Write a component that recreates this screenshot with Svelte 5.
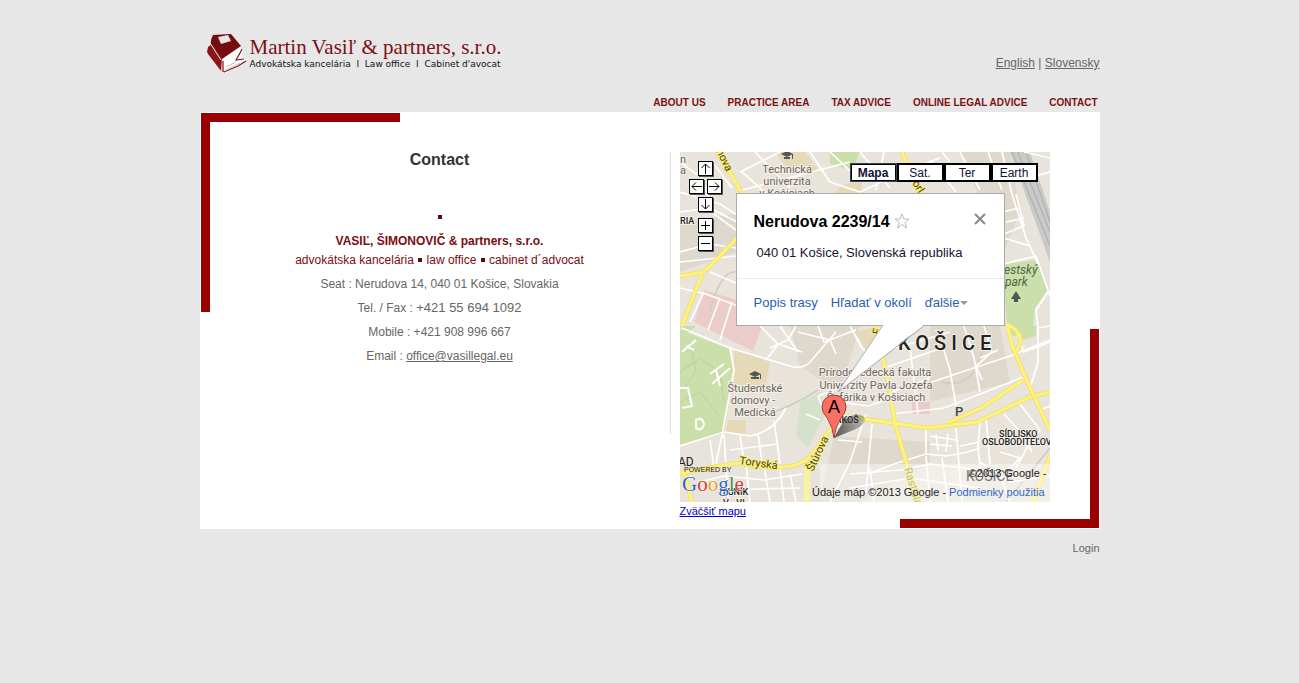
<script>
  const nav = ['About us', 'Practice area', 'Tax advice', 'Online legal advice', 'Contact'];
  const layers = ['Mapa', 'Sat.', 'Ter', 'Earth'];
  let layer = $state('Mapa');
  const pads = [
    { name: 'up', d: 'M6.5 12V2M2.500 6l4-4 4 4' },
    { name: 'left', d: 'M12 6.500H2M6 2.500l-4 4 4 4' },
    { name: 'right', d: 'M1 6.500h10M7 2.500l4 4-4 4' },
    { name: 'down', d: 'M6.500 1v10M2.500 7l4 4 4-4' },
    { name: 'zoom-in', d: 'M6.500 2v9M2 6.500h9' },
    { name: 'zoom-out', d: 'M2 6.500h9' }
  ];
  const minor = [
    'M0 40L40 52L62 66M0 60L30 56L57 70M60 20L100 0M62 38L170 10M75 0L110 36M130 0L150 30L180 40M150 0L180 28M62 20L90 45',
    'M0 100L30 92L56 96M0 110L56 104M20 20L34 62L56 78M0 10L16 22L34 12L52 36',
    'M0 136L26 142L58 154M30 120L58 132M24 140L10 170M40 146L28 178M52 150L40 188',
    'M2 176L50 196L110 214Q122 218 130 210L156 180M50 196L54 218L42 283L36 312',
    'M0 294L44 280L70 284Q94 280 106 256M86 208L98 192L80 174M98 192L122 200M100 174L118 200M90 196L108 188L116 174',
    'M44 282L48 346M60 284L64 310M78 282L82 310M94 268L100 312M30 288L34 316M50 298L98 292M66 312L70 350M84 314L90 350M100 316L104 350M20 330L44 324L84 328L122 322M40 338L120 336M110 322L116 350',
    'M138 244L148 270M138 244L170 232M140 268L126 262M150 276L186 268M186 262L170 310L150 350M192 272L186 340M158 288L182 290M160 250L188 254L206 248',
    'M118 180L150 188L156 202M138 174L144 190L176 178M170 174L182 196L196 210M196 200L216 196L270 180M204 216L262 196M212 262L264 256L326 232L346 224M230 196L238 262M262 192L270 218L276 254M284 174L294 206L300 240M304 174L312 200L296 214L302 228M318 198L300 206M252 230L330 204L370 188',
    'M212 240L250 226M246 276L246 302L214 312L188 322M246 302L266 304L288 300L300 296M276 276L282 350M300 270L298 296L302 330M250 284L276 288M250 292L272 294M256 282L258 298M268 282L266 300M280 294L300 290M306 266L310 312M324 262L342 282L352 300M340 252L360 278L346 296M312 290L336 288M320 300L340 306L324 322M336 316L350 290M360 258L370 254',
    'M170 322L220 318L250 312L300 318M170 336L230 326L300 336M190 316L194 350M246 304L250 350M262 306L268 350M300 310L330 330L370 324M320 322L330 350',
    'M322 0L332 42L346 86L358 112M330 30L370 20M322 60L340 56M324 86L350 94M326 70L344 66M336 42L344 74L324 82M308 0L322 38M280 0L300 38M250 8L276 40M262 0L270 10M324 112L356 104L370 144M368 140L356 158L358 176L370 174M344 0L370 6M358 176L358 210L350 236M336 180L344 200L370 190',
    'M180 40L210 26L260 6M196 38L204 0M180 0L210 36M220 20L240 12'
  ];
  const major = [
    'M0 124L23 120L36 108L57 86L80 60M23 120L12 148L2 174M37 0L50 20L62 42',
    'M222 0L230 20L243 42M0 321L40 314L57 311L80 315L103 315Q124 314 134 300L153 274',
    'M195 168L210 240L215 272L227 313L240 350M154 262L190 268L213 271L247 276L297 270L350 245L370 240',
    'M268 271L303 255L343 228M327 172L333 196L350 236L370 278M327 172Q350 184 334 202M370 304L353 350M4 321L12 350'
  ];
</script>

<svelte:head><title>Contact</title></svelte:head>

<div class="page">
  <header>
    <a class="logo" href="#home" aria-label="Home">
      <svg class="book" viewBox="0 0 42 42" aria-hidden="true">
        <path fill="#fff" d="M15 27L34 15L37 18L36 24L40 28L33 34L19 41Z" />
        <path fill="#760b10" d="M7 3L25 2L35 14L16 27L6 14Q3 11 7 3Z" />
        <path fill="#8c1318" d="M2 15L6 12L16 26L15 39L2 22L1 20Z" />
        <path fill="#e8e5e5" d="M12 5L22 3L25 9L15 12Z" />
        <path fill="none" stroke="#eee" d="M5 5Q2 10 6 14L15 28" />
        <path fill="none" stroke="#891117" stroke-width="1.2" d="M18 40L32 34L40 29M36 17L33 23M34 21L30 28L38 27M17 29L17 40" />
        <path fill="none" stroke="#c9bcbc" d="M20 38L34 31M20 35L30 30" />
      </svg>
      <span class="words"><b>Martin Vasiľ &amp; partners, s.r.o.</b><small>Advokátska kancelária &nbsp;I&nbsp; Law office &nbsp;I&nbsp; Cabinet d'avocat</small></span>
    </a>
    <div class="lang"><a href="#en">English</a> | <a href="#sk">Slovensky</a></div>
  </header>
  <nav>
    {#each nav as item}<a href="#{item}">{item}</a>{/each}
  </nav>

  <main>
    <section class="contact">
      <h1>Contact</h1>
      <p class="dot"><i></i></p>
      <p class="firm"><strong>VASIĽ, ŠIMONOVIČ &amp; partners, s.r.o.</strong><br />advokátska kancelária <i></i> law office <i></i> cabinet d´advocat</p>
      <p>Seat : Nerudova 14, 040 01 Košice, Slovakia</p>
      <p>Tel. / Fax : <span class="tel">+421 55 694 1092</span></p>
      <p>Mobile : +421 908 996 667</p>
      <p>Email : <a href="mailto:office@vasillegal.eu">office@vasillegal.eu</a></p>
    </section>

    <section class="location">
      <div class="map">
        <svg class="tiles" viewBox="0 0 370 350" aria-label="Košice">
          <rect width="370" height="350" fill="#e9e4db" />
          <path fill="#ded8cd" d="M0 70L56 62V100L0 120ZM110 174H180L160 240L120 214ZM154 284L250 290V310L180 350H140ZM250 174H320L330 230L250 250ZM280 0H330L340 60L324 100Z" />
          <path fill="#cadfaa" d="M0 178L50 197L54 220L44 282L0 293ZM0 174H16L4 184ZM150 0H180L172 18L150 12ZM322 112L357 108L368 137L355 156L352 184H328ZM332 174H356V184L342 188Z" />
          <path fill="#d6e1cb" d="M120 250L140 240L146 262L128 296L116 284Z" />
          <path fill="#ebcccb" d="M24 138L57 148V174H82L73 199L14 170ZM232 250H250V262H232Z" />
          <path fill="#e6d9b8" d="M54 196L90 210L86 234H54ZM48 268H66V282H46ZM95 0H125L140 20H110ZM176 180L198 174L192 210ZM160 34L182 28V41H155Z" />
          <path fill="#c9c9c7" d="M330 0H350L370 60V110Z" />
          <path fill="none" stroke="#aaa" d="M332 0L370 94M338 0L370 80M346 0L370 70" />
          <path fill="none" stroke="#d1cabe" stroke-width="1.5" d="M30 160Q40 118 56 120M82 264Q110 256 138 238M262 230Q302 240 306 174M326 350L370 296" />
          <path fill="none" stroke="#bbd29b" d="M0 220L20 206L40 220L44 250M0 250L20 240L38 262M10 190L16 220L4 236" />
          {#each minor as d}<path {d} fill="none" stroke="#fff" stroke-width="1.7" />{/each}
          <path fill="none" stroke="#fff" stroke-width="2" d="M2 200L16 188M6 194L14 198M30 222L44 212M32 232L50 216M36 218L40 234M0 236L8 236L12 254L2 256M16 268Q22 264 24 272Q22 280 16 276Z" />
          {#each major as d}<path {d} fill="none" stroke="#eedc70" stroke-width="4.5" /><path {d} fill="none" stroke="#fdf37c" stroke-width="3" />{/each}
          <path d="M127 312V350" stroke="#faf2a0" stroke-width="6" />
          <path fill="#555" d="M101 2L107 -1L113 2L107 5ZM104 5H110V7H104ZM69 222L75 219L81 222L75 225ZM71 225H79V227H71ZM336 139L341 147H338V150H334V147H331ZM112 2H113V7H112ZM80 222H81V227H80Z" />
          <g class="place">
            <text x="107" y="21">Technická</text><text x="107" y="33">univerzita</text><text x="107" y="45">v Košiciach</text>
            <text x="75" y="240">Študentské</text><text x="73" y="252">domovy -</text><text x="75" y="264">Medická</text>
            <text x="195" y="224">Prírodovedecká fakulta</text><text x="196" y="237">Univerzity Pavla Jozefa</text><text x="196" y="249">Šafárika v Košiciach</text>
            <text x="3" y="11">n</text><text x="3" y="22">a</text>
          </g>
          <g class="green"><text x="324" y="122">estský</text><text x="325" y="134">park</text></g>
          <g class="area">
            <text x="0" y="72">RIA</text><text x="149" y="271">NÁKOŠ</text><text x="319" y="285">SÍDLISKO</text><text x="302" y="293">OSLOBODITEĽOV</text>
            <text x="43" y="343">ĽUNÍK</text><text x="43" y="354">V - VI</text>
          </g>
          <text class="road" transform="translate(36 -1) rotate(64)">nova</text>
          <text class="road" transform="translate(232 31) rotate(58)">orl</text>
          <text class="road" transform="translate(200 183) rotate(-80)">F</text>
          <text class="road" transform="translate(59 312) rotate(8)">Toryská</text>
          <text class="road" transform="translate(133 320) rotate(-65)">Štúrova</text>
          <text class="road pale" transform="translate(224 317) rotate(73)">Rastislav</text>
          <text class="city" x="218" y="198">KOŠICE</text>
          <text class="park" x="275" y="264">P</text>
          <text class="ad" x="-2" y="314">AD</text>
          <rect x="140" y="312" width="230" height="38" fill="#fff" opacity=".4" />
          <text class="ghost" x="286" y="329">KOŠICE</text>
          <text class="powered" x="4" y="320">POWERED BY</text>
          <text class="google" x="2" y="339"><tspan fill="#3565c4">G</tspan><tspan fill="#d83a35">o</tspan><tspan fill="#e0a41a">o</tspan><tspan fill="#3565c4">g</tspan><tspan fill="#36934a">l</tspan><tspan fill="#d83a35">e</tspan></text>
        </svg>
        <div class="pad">
          {#each pads as p}
            <button class={p.name} aria-label={p.name}><svg viewBox="0 0 13 13"><path d={p.d} /></svg></button>
          {/each}
        </div>
        <div class="layers">
          {#each layers as l}<button class:on={layer === l} onclick={() => (layer = l)}>{l}</button>{/each}
        </div>
        <div class="bubble">
          <div class="info">
            <h2>Nerudova 2239/14 <svg class="star" viewBox="0 0 16 16"><path d="M8 1l2 5h5l-4 3.500 1.500 5.500L8 11.500 3.500 15 5 9.500 1 6h5z" /></svg></h2>
            <button class="close" aria-label="Close"><svg viewBox="0 0 12 12"><path d="M1 1l10 10M11 1l-10 10" /></svg></button>
            <p>040 01 Košice, Slovenská republika</p>
          </div>
          <div class="actions"><a href="#trasa">Popis trasy</a><a href="#okolie">Hľadať v okolí</a><a href="#dalsie">ďalšie<span class="caret"></span></a></div>
        </div>
        <svg class="marker" viewBox="0 0 370 350" aria-hidden="true">
          <defs><linearGradient id="shade"><stop stop-color="#222" stop-opacity=".75" /><stop offset="1" stop-color="#444" stop-opacity=".3" /></linearGradient></defs>
          <path fill="#fff" d="M203 172L158 240L245 172Z" />
          <path fill="none" stroke="#aaa" d="M203 173L158 240L245 173" />
          <path fill="url(#shade)" d="M154 286L164 268Q175 260 183 264Q189 270 176 277Z" />
          <path fill="#fa7164" stroke="#a33c35" d="M154 286Q153 275 147 266Q142 260 142 255A12 12 0 0 1 166 255Q166 260 161 266Q155 275 154 286Z" />
          <text x="154" y="261">A</text>
        </svg>
        <div class="credits"><span>©2013 Google -</span><span>Údaje máp ©2013 Google - <a href="#podmienky">Podmienky použitia</a></span></div>
      </div>
      <a class="larger" href="#mapa">Zväčšiť mapu</a>
    </section>
  </main>
  <footer><a href="#login">Login</a></footer>
</div>

<style>
  :global(body) { margin: 0; background: #e7e7e7; }
  .page { max-width: 900px; margin: 0 auto; font: 12px/18px "Liberation Sans", Arial, sans-serif; color: #666; }
  a { color: inherit; }
  header { display: flex; justify-content: space-between; align-items: flex-end; padding: 32px 0 0 6px; }
  .logo { display: flex; gap: 2px; text-decoration: none; }
  .book { width: 42px; height: 42px; }
  .words { display: flex; flex-direction: column; white-space: nowrap; padding-top: 4px; }
  .words b { font: 21px/22px "Liberation Serif", serif; color: #7c1016; }
  .words small { font: 9px/12px "DejaVu Sans", sans-serif; color: #111; }
  .lang { padding-bottom: 2px; }
  nav { display: flex; justify-content: flex-end; gap: 22px; padding: 19px 2px 0 0; font-size: 10px; font-weight: bold; line-height: 19px; text-transform: uppercase; }
  nav a { color: #7e1013; text-decoration: none; }
  main { position: relative; display: flex; align-items: flex-start; gap: 9px; padding: 40px 50px 9px 10px; background: #fff; }
  main::before, main::after { content: ""; position: absolute; box-sizing: border-box; width: 199px; height: 199px; pointer-events: none; }
  main::before { top: 1px; left: 1px; border: solid #900; border-width: 9px 0 0 9px; }
  main::after { right: 1px; bottom: 1px; border: solid #900; border-width: 0 9px 9px 0; }
  .contact { flex: 1; min-height: 282px; border-right: 1px solid #ddd; text-align: center; }
  h1 { margin: 0 0 41px; font-size: 16px; line-height: 15px; color: #333; }
  p { margin: 0 0 6px; }
  .firm { line-height: 19px; color: #7a0c12; margin-bottom: 5px; }
  i { display: inline-block; width: 4px; height: 4px; margin: 0 1px 2px; background: #5a0a20; }
  .tel { font-size: 13px; }
  .location { flex: 0 0 370px; }
  .map { position: relative; height: 350px; overflow: hidden; }
  .tiles, .marker { position: absolute; inset: 0; width: 100%; height: 100%; }
  .marker { pointer-events: none; }
  .marker text { font: 18px "Liberation Sans", sans-serif; text-anchor: middle; fill: #000; }
  .place { font: 11px Roboto, sans-serif; fill: #6b645f; text-anchor: middle; stroke: #f4f0e9; stroke-width: 2px; paint-order: stroke; }
  .green { font: italic 12px Roboto, sans-serif; fill: #4d6342; }
  .area { font: 500 9px Roboto, sans-serif; fill: #222; stroke: #f4f0e9; stroke-width: 2px; paint-order: stroke; }
  .road { font: 11px Roboto, sans-serif; fill: #4a4315; stroke: #faf07e; stroke-width: 2px; paint-order: stroke; }
  .pale { fill: #8b8560; }
  .city { font: 500 20px Roboto, sans-serif; letter-spacing: 5px; fill: #222; stroke: #f4f0e9; stroke-width: 2px; paint-order: stroke; }
  .park { font: 500 13px Roboto, sans-serif; fill: #444; }
  .ad { font: 12px Roboto, sans-serif; fill: #222; }
  .ghost { font: 14px Roboto, sans-serif; fill: #777; }
  .powered { font: 7px "Liberation Sans", sans-serif; fill: #222; }
  .google { font: 21px "Liberation Serif", serif; stroke: #fff; stroke-width: 1px; paint-order: stroke; }
  .pad { position: absolute; left: 9px; top: 8px; display: grid; grid-template: "u u" 16px "l r" 16px "d d" 16px "i i" 19px "o o" 16px / 16px 16px; gap: 2px; justify-items: center; align-items: end; }
  .pad button { width: 15px; height: 15px; padding: 0; border: 1px solid #000; background: #fff; box-shadow: 1px 1px #555; }
  .pad svg { display: block; width: 13px; height: 13px; fill: none; stroke: #000; }
  .up { grid-area: u; } .left { grid-area: l; } .right { grid-area: r; } .down { grid-area: d; } .zoom-in { grid-area: i; } .zoom-out { grid-area: o; }
  .layers { position: absolute; left: 170px; top: 11px; display: flex; }
  .layers button { box-sizing: border-box; width: 47px; height: 19px; padding: 1px 0 0; border: 1px solid #000; outline: 1px solid #000; outline-offset: -2px; background: #fff; font: 12px/16px "Liberation Sans", sans-serif; color: #113; }
  .layers .on { font-weight: bold; border-color: #345; }
  .bubble { position: absolute; left: 56px; top: 41px; box-sizing: border-box; width: 269px; height: 133px; border: 1px solid #aaa; background: #fff; }
  .info { display: grid; grid-template-columns: 1fr auto; align-items: center; height: 85px; box-sizing: border-box; padding: 17px 18px 0 17px; border-bottom: 1px solid #eee; align-content: start; }
  h2 { margin: 0; font-size: 16px; line-height: 21px; color: #000; }
  .star { width: 16px; height: 16px; vertical-align: -2px; fill: none; stroke: #bbb; }
  .close { padding: 0; border: 0; background: none; margin-bottom: 6px; }
  .close svg { display: block; width: 12px; height: 12px; fill: none; stroke: #888; stroke-width: 2; }
  .info p { grid-column: 1 / 3; margin: 11px 0 0 3px; font-size: 13px; line-height: 19px; color: #213; }
  .actions { display: flex; gap: 13px; padding: 15px 17px; font-size: 13px; color: #2a5db0; }
  .actions a { text-decoration: none; white-space: nowrap; }
  .caret { display: inline-block; border: solid transparent; border-width: 4px 4px 0; border-top-color: #999; margin: 0 0 2px 1px; }
  .credits { position: absolute; right: 3px; bottom: 0; display: flex; flex-direction: column; align-items: flex-end; font-size: 11px; line-height: 19px; color: #222; white-space: nowrap; }
  .credits a { color: #36c; text-decoration: none; margin-right: 2px; }
  .larger { font-size: 11px; line-height: 18px; display: block; width: max-content; color: #00c; }
  footer { padding-top: 10px; text-align: right; font-size: 11px; }
  footer a { text-decoration: none; }
</style>
